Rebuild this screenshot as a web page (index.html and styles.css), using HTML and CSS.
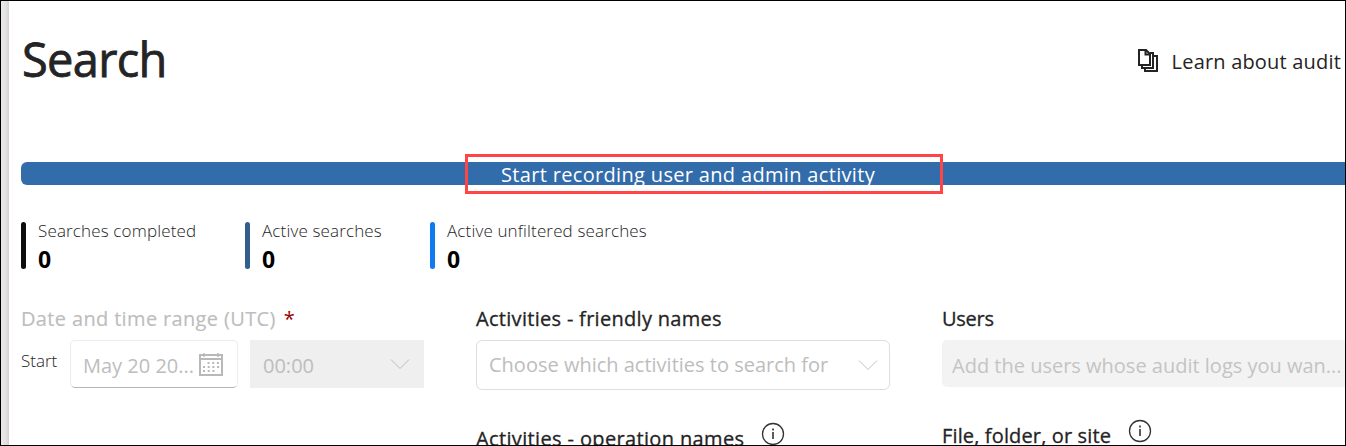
FILE: index.html
```html
<!DOCTYPE html>
<html lang="en">
<head>
<meta charset="utf-8">
<title>Audit search</title>
<link rel="stylesheet" href="styles.css">
</head>
<body>
<div class="frame">
  <div class="rail"></div>
  <main class="main">
    <header class="header">
      <h1 class="title">Search</h1>
      <a class="learn">
        <svg class="pages" width="22" height="24" viewBox="0 0 22 24" fill="none" stroke="#242424" stroke-width="2"><path d="M1 2h7l4 4v11H1zM7.500 2v4.500H12M12 5h3v15H4v-3M15 8h4v15H7v-3"/></svg>
        <span class="learn-text">Learn about audit</span>
      </a>
    </header>
    <div class="banner"><span class="banner-text">Start recording user and admin activity</span><div class="highlight"></div></div>
    <section class="stats">
      <div class="stat stat-done"><span class="stat-label">Searches completed</span><b class="stat-num">0</b></div>
      <div class="stat stat-active"><span class="stat-label">Active searches</span><b class="stat-num">0</b></div>
      <div class="stat stat-unfiltered"><span class="stat-label">Active unfiltered searches</span><b class="stat-num">0</b></div>
    </section>
    <section class="form">
      <div class="col">
        <div class="label muted"><span class="t-date">Date and time range (UTC)</span><span class="req">*</span></div>
        <div class="row">
          <span class="start">Start</span>
          <div class="date"><span class="t-may">May 20 20...</span>
            <svg class="cal" width="24" height="24" viewBox="0 0 24 24" fill="none" stroke="#b8b8b8"><path stroke-width="2" d="M1 2h22v20H1zM1 6h22"/><path stroke-width="1.500" d="M5 0v4M19 0v4"/><path stroke-width="2" stroke-dasharray="2 2.700" d="M8.500 10h12M4 14h16.500M4 18h12"/></svg>
          </div>
          <div class="time"><span class="t-time">00:00</span><svg class="chev" width="20" height="12" viewBox="0 0 20 12" fill="none" stroke="#bdbdbd"><path d="M1 1.500l9 9 9-9"/></svg></div>
        </div>
      </div>
      <div class="col">
        <div class="label"><span class="t-friendly">Activities - friendly names</span></div>
        <div class="pick"><span class="t-choose">Choose which activities to search for</span><svg class="chev" width="20" height="12" viewBox="0 0 20 12" fill="none" stroke="#c4c4c4"><path d="M1 1.500l9 9 9-9"/></svg></div>
        <div class="label second-op"><span class="t-op">Activities - operation names</span>
          <svg class="info" width="24" height="24" viewBox="0 0 24 24" fill="none" stroke="#333"><circle cx="12" cy="12" r="10.500" stroke-width="1.300"/><path stroke-width="1.600" d="M12 10v7M12 6.500v2"/></svg></div>
      </div>
      <div class="col">
        <div class="label"><span class="t-users">Users</span></div>
        <div class="users"><span class="t-add">Add the users whose audit logs you wan...</span></div>
        <div class="label second-file"><span class="t-file">File, folder, or site</span>
          <svg class="info" width="24" height="24" viewBox="0 0 24 24" fill="none" stroke="#333"><circle cx="12" cy="12" r="10.500" stroke-width="1.300"/><path stroke-width="1.600" d="M12 10v7M12 6.500v2"/></svg></div>
      </div>
    </section>
  </main>
</div>
</body>
</html>
```
FILE: styles.css
```css
* { box-sizing: border-box; }
body { margin: 0; background: #fff; font-family: "Open Sans", "Noto Sans", sans-serif; color: #242424; }
span { white-space: nowrap; }
svg { display: block; flex: none; }
.frame { display: flex; width: 1346px; height: 446px; border: 1px solid #000; overflow: hidden; }
.rail { width: 8px; flex: none; background: linear-gradient(90deg, #ebe8e8 0, #e4e2e2 60%, #d2d0d0 100%); }
.main { flex: none; width: 1336px; padding-left: 12px; overflow: hidden; }
.header { display: flex; justify-content: space-between; height: 161px; padding: 28px 4px 0 1px; }
.title { margin: 0; font-size: 47px; line-height: 60px; font-weight: 400; letter-spacing: -0.7px; -webkit-text-stroke: 0.8px #242424; }
.learn { display: flex; gap: 12px; padding-top: 19px; }
.learn-text { font-size: 20px; line-height: 28px; letter-spacing: 0.19px; }
.banner { position: relative; height: 23px; background: #326cab; border-radius: 6px 0 0 6px; color: #fff; padding-left: 480px; font-size: 20px; line-height: 25px; letter-spacing: 0.33px; }
.banner-text { display: block; height: 23px; }
.highlight { position: absolute; left: 444px; top: -8px; width: 478px; height: 40px; border: 3px solid #ff4545; }
.stats { display: flex; margin-top: 37px; height: 47px; }
.stat { position: relative; display: flex; flex-direction: column; padding-left: 17px; }
.stat::before { content: ""; position: absolute; left: 0; top: 0; width: 5px; height: 47px; border-radius: 2.500px; background: #0c0c0c; }
.stat-done { width: 224px; }
.stat-active { width: 185px; }
.stat-active::before { background: #335f8d; }
.stat-unfiltered::before { background: #0f7bf0; }
.stat-label { font-size: 17px; line-height: 18px; font-weight: 300; letter-spacing: 0.15px; }
.stat-num { margin-top: 7px; font-size: 23px; line-height: 24px; color: #000; }
.form { display: grid; grid-template-columns: 455px 466px 403px; margin-top: 36px; }
.label { display: flex; font-size: 20px; line-height: 28px; height: 28px; -webkit-text-stroke: 0.3px #242424; }
.muted { color: #bdbdbd; -webkit-text-stroke: 0.15px #bdbdbd; }
.t-date { letter-spacing: 0.35px; }
.t-friendly { letter-spacing: 0.3px; }
.t-op { letter-spacing: 0.36px; }
.t-file { letter-spacing: 0.14px; }
.t-users { letter-spacing: -0.25px; }
.req { color: #900; margin-left: 8px; -webkit-text-stroke: 0; }
.row { display: flex; margin-top: 7px; }
.start { width: 49px; font-size: 17px; line-height: 41px; font-weight: 300; }
.date { display: flex; justify-content: space-between; width: 168px; height: 48px; padding: 12px 14px 0 12px; border: 1px solid #ececec; border-bottom-color: #b5b5b5; border-radius: 5px; color: #bdbdbd; font-size: 20px; line-height: 26px; }
.time { display: flex; justify-content: space-between; margin-left: 12px; width: 174px; height: 48px; padding: 13px 14px 0 13px; background: #efefef; color: #bdbdbd; font-size: 20px; line-height: 26px; }
.time .chev { margin-top: 5px; }
.pick { display: flex; justify-content: space-between; margin-top: 7px; width: 414px; height: 50px; padding: 11px 11px 0 12px; border: 1px solid #dedede; border-radius: 6px; color: #bdbdbd; font-size: 20px; line-height: 26px; }
.pick .chev { margin-top: 7px; }
.users { margin-top: 7px; height: 47px; padding: 13px 0 0 10px; border-radius: 5px 0 0 5px; background: #f3f3f3; color: #c4c4c4; font-size: 20px; line-height: 26px; }
.second-op { margin-top: 35px; }
.second-file { margin-top: 35px; }
.info { margin-left: 17px; margin-top: -3px; }
```
